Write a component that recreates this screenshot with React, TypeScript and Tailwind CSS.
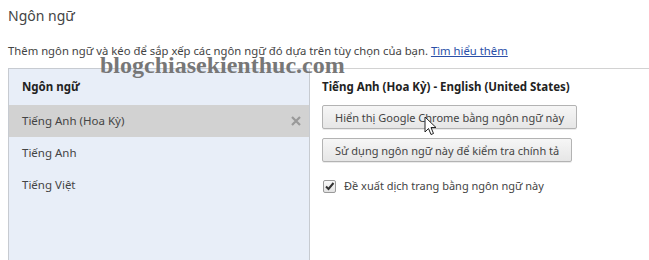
const font = { fontFamily: '"Noto Sans", "Open Sans", sans-serif' };

const languages = [
  { name: "Tiếng Anh (Hoa Kỳ)", selected: true },
  { name: "Tiếng Anh", selected: false },
  { name: "Tiếng Việt", selected: false },
];

const Cursor = () => (
  <svg width="14" height="20" viewBox="0 0 14 20" className="absolute left-[424px] top-[116px]">
    <path d="M1 1 L1 16 L4.5 12.5 L7 18.5 L9.5 17.5 L7 11.5 L12 11.5 Z" fill="#fff" stroke="#222" strokeWidth="1" strokeLinejoin="round" />
  </svg>
);

const Button = ({ label }: { label: string }) => (
  <button className="h-[24px] px-[12px] text-[11px] text-[#444] border border-[#b3b3b3] rounded-[2px] bg-gradient-to-b from-[#f6f6f6] to-[#e6e6e6] shadow-[0_1px_0_rgba(0,0,0,0.08)] leading-none self-start">
    {label}
  </button>
);

export default function App() {
  return (
    <div className="relative h-[260px] w-[649px] overflow-hidden bg-white text-[#333]" style={font}>
      <div className="pl-2 pt-[6px]">
        <h2 className="text-[14px] text-[#444] leading-[20px]">Ngôn ngữ</h2>
        <p className="mt-[17px] text-[11.3px] text-[#444] leading-[16px]">
          Thêm ngôn ngữ và kéo để sắp xếp các ngôn ngữ đó dựa trên tùy chọn của bạn.{" "}
          <a className="text-[#2a4fa8] underline">Tìm hiểu thêm</a>
        </p>
        <div className="mt-[9px] flex">
          <div className="w-[302px] h-[200px] border border-[#c7cbd1] bg-[#e8eef8]">
            <div className="h-[36px] flex items-center px-[13px] text-[11.5px] font-bold text-[#222]">Ngôn ngữ</div>
            {languages.map((lang) => (
              <div
                key={lang.name}
                className={`h-[32px] flex items-center justify-between px-[13px] text-[11.5px] text-[#444] ${lang.selected ? "bg-[#d2d2d2]" : ""}`}
              >
                <span>{lang.name}</span>
                {lang.selected && (
                  <svg width="10" height="10" viewBox="0 0 10 10" className="mr-[-5px]">
                    <path d="M1 1 L9 9 M9 1 L1 9" stroke="#999" strokeWidth="2.2" />
                  </svg>
                )}
              </div>
            ))}
          </div>
          <div className="flex-1 border-t border-[#d2d2d2] pl-3 flex flex-col">
            <div className="h-[36px] flex items-center text-[11.5px] font-bold text-[#222]">
              Tiếng Anh (Hoa Kỳ) - English (United States)
            </div>
            <div className="flex flex-col gap-[9px]">
              <Button label="Hiển thị Google Chrome bằng ngôn ngữ này" />
              <Button label="Sử dụng ngôn ngữ này để kiểm tra chính tả" />
            </div>
            <label className="mt-[16px] flex items-center gap-[8px] text-[11px] text-[#444]">
              <span className="w-[13px] h-[13px] border border-[#9a9a9a] rounded-[2px] bg-gradient-to-b from-[#fafafa] to-[#e2e2e2] flex items-center justify-center ml-[1px]">
                <svg width="11" height="11" viewBox="0 0 11 11">
                  <path d="M2 5.5 L4.5 8 L9.5 2" fill="none" stroke="#333" strokeWidth="2" />
                </svg>
              </span>
              Đề xuất dịch trang bằng ngôn ngữ này
            </label>
          </div>
        </div>
      </div>
      <div
        className="absolute left-[100px] top-[53px] text-[24px] font-bold text-[#777] leading-none"
        style={{ fontFamily: '"Liberation Serif", "DejaVu Serif", serif' }}
      >
        blogchiasekienthuc.com
      </div>
      <Cursor />
    </div>
  );
}
